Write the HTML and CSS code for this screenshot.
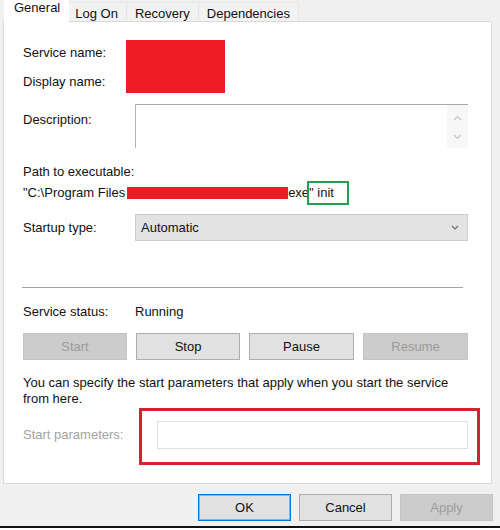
FILE: index.html
```html
<!DOCTYPE html>
<html lang="en">
<head>
  <meta charset="UTF-8">
  <title>Service Properties</title>
  <link rel="stylesheet" href="styles.css">
</head>
<body>
  <div class="window">
    <div class="tabs">
      <div class="tab active">General</div>
      <div class="tab first">Log On</div>
      <div class="tab">Recovery</div>
      <div class="tab">Dependencies</div>
    </div>

    <div class="panel">
      <div class="names">
        <div class="label">Service name:</div>
        <div class="redact names-redact"></div>
        <div class="label">Display name:</div>
      </div>

      <div class="row desc-row">
        <div class="label desc-label">Description:</div>
        <div class="desc-box">
          <div class="desc-text"></div>
          <div class="scroll">
            <svg width="9" height="6" viewBox="0 0 9 6"><polyline points="1,5 4.5,1.5 8,5" fill="none" stroke="#c4c4c4" stroke-width="1.2"/></svg>
            <svg width="9" height="6" viewBox="0 0 9 6"><polyline points="1,1 4.5,4.5 8,1" fill="none" stroke="#c4c4c4" stroke-width="1.2"/></svg>
          </div>
        </div>
      </div>

      <div class="path">
        <div>Path to executable:</div>
        <div class="path-line">"C:\Program Files<span class="redact path-redact"></span>exe<span class="mark">" init</span></div>
      </div>

      <div class="row startup-row">
        <div class="label">Startup type:</div>
        <div class="combo">
          <span>Automatic</span>
          <svg width="8" height="5" viewBox="0 0 8 5"><polyline points="1,1 4,4 7,1" fill="none" stroke="#6a6a6a" stroke-width="1.1"/></svg>
        </div>
      </div>

      <div class="separator"></div>

      <div class="row status-row">
        <div class="label">Service status:</div>
        <div>Running</div>
      </div>

      <div class="actions">
        <button class="btn" disabled>Start</button>
        <button class="btn">Stop</button>
        <button class="btn">Pause</button>
        <button class="btn" disabled>Resume</button>
      </div>

      <p class="hint">You can specify the start parameters that apply when you start the service from here.</p>

      <div class="params-row">
        <div class="label muted">Start parameters:</div>
        <div class="params-field">
          <div class="params-input"></div>
        </div>
      </div>
    </div>

    <div class="footer">
      <button class="btn wide default">OK</button>
      <button class="btn wide">Cancel</button>
      <button class="btn wide" disabled>Apply</button>
    </div>
  </div>
</body>
</html>
```

FILE: styles.css
```css
body {
  margin: 0;
  background: #fff;
  font-family: "Liberation Sans", Arial, sans-serif;
  font-size: 13px;
  color: #111;
}

.window {
  height: 526px;
  background: #f0f0f0;
  border-bottom: 2px solid #111;
  overflow: hidden;
}

/* tab strip */
.tabs {
  display: flex;
  align-items: flex-end;
  height: 21px;
  padding-left: 4px;
}

.tab {
  height: 19px;
  line-height: 21px;
  padding: 0 8px;
  background: #f2f2f2;
  border-top: 1px solid #e6e6e6;
  border-right: 1px solid #e6e6e6;
  box-sizing: border-box;
}

.tab.first {
  padding-left: 6px;
}

.tab.active {
  position: relative;
  z-index: 1;
  height: 22px;
  margin-bottom: -1px;
  line-height: 16px;
  padding: 0 9px 0 10px;
  background: #fff;
  border: none;
}

/* main page */
.panel {
  height: 463px;
  margin: 0 8px 0 3px;
  padding: 19px 23px 0 19px;
  background: #fff;
  border: 1px solid #d9d9d9;
  box-sizing: border-box;
}

.label {
  line-height: 22px;
}

.muted {
  color: #a3a3a3;
}

.redact {
  background: #ee1c25;
}

.names {
  display: grid;
  grid-template-columns: 103px 99px;
  grid-template-rows: 22px 22px;
  row-gap: 7px;
}

.names .label {
  padding-top: 1px;
}

.names-redact {
  grid-column: 2;
  grid-row: 1 / 3;
  margin: -1px 0 -1px;
}

.row {
  display: grid;
  grid-template-columns: 112px 1fr;
}

.desc-row {
  margin-top: 12px;
}

.desc-label {
  padding-top: 5px;
}

.desc-box {
  display: flex;
  height: 44px;
  border-top: 1px solid #a8a8a8;
  border-left: 1px solid #b4b4b4;
  box-sizing: border-box;
}

.desc-text {
  flex: 1;
}

.scroll {
  width: 21px;
  background: #f7f7f7;
  display: flex;
  flex-direction: column;
  align-items: center;
  justify-content: space-between;
  padding: 10px 0 8px;
  box-sizing: border-box;
}

.path {
  margin-top: 14px;
  line-height: 20px;
}

.path-line {
  padding-top: 1px;
}

.path-redact {
  display: inline-block;
  width: 161px;
  height: 12px;
  margin-left: 2px;
  vertical-align: -2px;
}

.mark {
  position: relative;
}

.mark::after {
  content: "";
  position: absolute;
  left: -2px;
  right: -15px;
  top: -4px;
  bottom: -5px;
  border: 2px solid #21a04f;
}

.startup-row {
  margin-top: 11px;
  align-items: center;
}

.combo {
  display: flex;
  align-items: center;
  justify-content: space-between;
  height: 27px;
  padding: 0 8px 0 5px;
  background: #e3e3e3;
  border: 1px solid #cdcdcd;
  box-sizing: border-box;
}

.separator {
  height: 1px;
  margin: 46px 5px 0 -1px;
  background: #a4a4a4;
}

.status-row {
  margin-top: 13px;
  line-height: 22px;
}

.btn {
  height: 27px;
  padding: 0;
  font-family: inherit;
  font-size: 13px;
  color: #111;
  background: #e1e1e1;
  border: 1px solid #adadad;
  box-sizing: border-box;
}

.btn:disabled {
  color: #9b9b9b;
  background: #cccccc;
  border-color: #c4c4c4;
}

.actions {
  display: grid;
  grid-template-columns: 104px 104px 105px 1fr;
  column-gap: 9px;
  margin-top: 10px;
}

.hint {
  margin: 15px 0 0;
  line-height: 16px;
}

.params-row {
  display: grid;
  grid-template-columns: 134px 1fr;
  align-items: center;
  margin-top: 14px;
}

.params-field {
  position: relative;
}

.params-field::after {
  content: "";
  position: absolute;
  left: -18px;
  right: -12px;
  top: -13px;
  bottom: -16px;
  border: 3px solid #d2232e;
}

.params-input {
  height: 28px;
  border: 1px solid #e0e0e0;
  box-sizing: border-box;
}

/* dialog buttons */
.footer {
  display: flex;
  justify-content: flex-end;
  gap: 8px;
  margin-top: 10px;
  padding-right: 7px;
}

.btn.wide {
  width: 93px;
}

.btn.default {
  border-color: #0078d7;
  box-shadow: inset 0 0 0 1px #7db5e6;
}
```
